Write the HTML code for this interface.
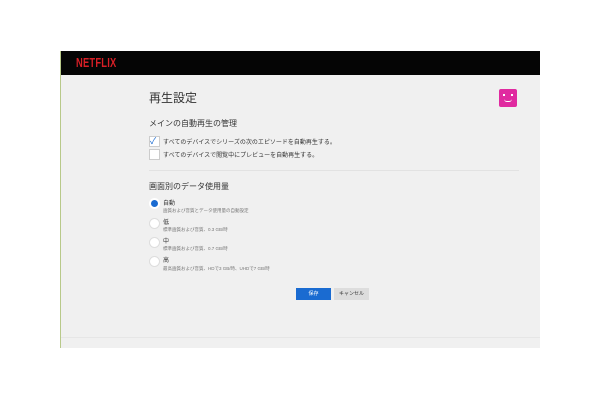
<!DOCTYPE html>
<html><head><meta charset="utf-8"><style>
body{margin:0;width:600px;height:400px;background:#fff;position:relative;font-family:"Liberation Sans","Noto Sans CJK JP",sans-serif;overflow:hidden}
.box{position:absolute;left:60px;top:51px;width:479px;height:297px;background:#f0f0f0;border-left:1px solid #b8c98a}
.hdr{position:absolute;left:0;top:0;width:479px;height:24px;background:#050505}
.logo{position:absolute;left:15px;top:4px;color:#d81f26;font-weight:bold;font-size:13px;letter-spacing:0.3px;transform:scaleX(0.72);transform-origin:left}
.t{position:absolute;white-space:nowrap;color:#333}
.cb{position:absolute;width:9px;height:9px;background:#fff;border:1px solid #ccc}
.rd{position:absolute;width:9px;height:9px;border-radius:50%;background:#fff;border:1px solid #ddd}
.btn{position:absolute;height:12px;font-size:5px;line-height:12px;text-align:center}
</style></head><body>
<div class="box">
<div class="hdr"><div class="logo">NETFLIX</div></div>
<div style="position:absolute;left:438px;top:38px;width:18px;height:18px;background:#e02aa0;border-radius:2px">
<div style="position:absolute;left:4px;top:5px;width:2px;height:2px;background:#fff"></div>
<div style="position:absolute;left:12px;top:5px;width:2px;height:2px;background:#fff"></div>
<div style="position:absolute;left:5px;top:10px;width:8px;height:2px;border-bottom:1px solid #fff;border-radius:0 0 4px 4px"></div></div>
<div class="t" style="left:88px;top:38px;font-size:12px">再生設定</div>
<div class="t" style="left:88px;top:67px;font-size:8px">メインの自動再生の管理</div>
<div class="cb" style="left:88px;top:85px"></div>
<div class="t" style="left:89px;top:83px;font-size:9px;color:#1a6bd1">✓</div>
<div class="t" style="left:102px;top:86px;font-size:6px">すべてのデバイスでシリーズの次のエピソードを自動再生する。</div>
<div class="cb" style="left:88px;top:98px"></div>
<div class="t" style="left:102px;top:99px;font-size:6px">すべてのデバイスで閲覧中にプレビューを自動再生する。</div>
<div style="position:absolute;left:88px;top:119px;width:370px;height:1px;background:#e2e2e2"></div>
<div class="t" style="left:88px;top:130px;font-size:8px">画面別のデータ使用量</div>
<div class="rd" style="left:88px;top:147px;background:#1a6bd1;border:2px solid #fff;width:7px;height:7px"></div>
<div class="t" style="left:102px;top:147px;font-size:6px">自動</div>
<div class="t" style="left:102px;top:157px;font-size:4.5px;color:#777">画質および音質とデータ使用量の自動設定</div>
<div class="rd" style="left:88px;top:167px"></div>
<div class="t" style="left:102px;top:166px;font-size:6px">低</div>
<div class="t" style="left:102px;top:176px;font-size:4.5px;color:#777">標準画質および音質、0.3 GB/時</div>
<div class="rd" style="left:88px;top:186px"></div>
<div class="t" style="left:102px;top:185px;font-size:6px">中</div>
<div class="t" style="left:102px;top:195px;font-size:4.5px;color:#777">標準画質および音質、0.7 GB/時</div>
<div class="rd" style="left:88px;top:205px"></div>
<div class="t" style="left:102px;top:204px;font-size:6px">高</div>
<div class="t" style="left:102px;top:215px;font-size:4.5px;color:#777">最高画質および音質、HDで3 GB/時、UHDで7 GB/時</div>
<div class="btn" style="left:235px;top:237px;width:35px;background:#1a6bd1;color:#fff">保存</div>
<div class="btn" style="left:273px;top:237px;width:35px;background:#ddd;color:#333">キャンセル</div>
<div style="position:absolute;left:0;top:286px;width:479px;height:1px;background:#e6e6e6"></div>
</div>
</body></html>
